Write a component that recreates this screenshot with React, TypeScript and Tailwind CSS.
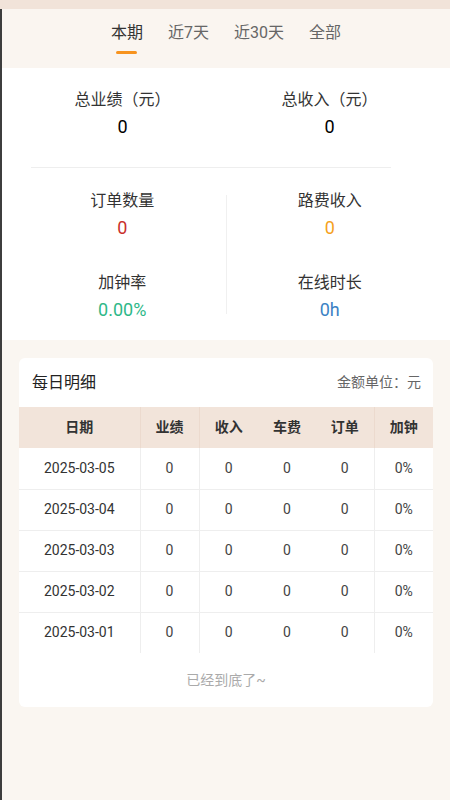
import { useState } from "react";

const tabs = ["本期", "近7天", "近30天", "全部"];

const rows = [
  { date: "2025-03-05", perf: 0, income: 0, fare: 0, orders: 0, extra: "0%" },
  { date: "2025-03-04", perf: 0, income: 0, fare: 0, orders: 0, extra: "0%" },
  { date: "2025-03-03", perf: 0, income: 0, fare: 0, orders: 0, extra: "0%" },
  { date: "2025-03-02", perf: 0, income: 0, fare: 0, orders: 0, extra: "0%" },
  { date: "2025-03-01", perf: 0, income: 0, fare: 0, orders: 0, extra: "0%" },
];

function Stat({ label, value, color }: { label: string; value: string; color: string }) {
  return (
    <div className="flex flex-col items-center">
      <span className="text-[16px] leading-[22px] text-[#333]">{label}</span>
      <span className={`mt-[4px] text-[18px] leading-[24px] ${color}`}>{value}</span>
    </div>
  );
}

export default function App() {
  const [active, setActive] = useState(0);

  return (
    <div className="min-h-[800px] bg-[#faf6f1] font-['Roboto','Noto_Sans_CJK_SC',sans-serif]">
      <div className="h-[9px] bg-[#f1e3d9]" />
      <div className="min-h-[791px] border-l-2 border-[#3d3d3d]">
        {/* Tabs */}
        <div className="flex justify-center gap-[25px] bg-[#faf5f0] pt-[13px] pb-[14px]">
          {tabs.map((t, i) => (
            <button
              key={t}
              onClick={() => setActive(i)}
              className="flex flex-col items-center"
            >
              <span
                className={`text-[16px] leading-[22px] ${
                  i === active ? "text-[#333]" : "text-[#666]"
                }`}
              >
                {t}
              </span>
              <span
                className={`mt-[7px] h-[3px] w-[21px] rounded-full ${
                  i === active ? "bg-[#f7931e]" : "bg-transparent"
                }`}
              />
            </button>
          ))}
        </div>

        {/* Summary */}
        <div className="bg-white pt-[21px] pb-[18px]">
          <div className="mx-[17px] grid grid-cols-2">
            <div className="flex flex-col items-center">
              <span className="text-[16px] leading-[22px] text-[#333]">总业绩（元）</span>
              <span className="mt-[4px] text-[18px] leading-[24px] text-black">0</span>
            </div>
            <div className="flex flex-col items-center">
              <span className="text-[16px] leading-[22px] text-[#333]">总收入（元）</span>
              <span className="mt-[4px] text-[18px] leading-[24px] text-black">0</span>
            </div>
          </div>

          <div className="mt-[28px] ml-[29px] h-px w-[360px] bg-[#eeeeee]" />

          <div className="mx-[17px] mt-[22px] flex">
            <div className="flex flex-1 flex-col gap-[32px]">
              <Stat label="订单数量" value="0" color="text-[#c9302c]" />
              <Stat label="加钟率" value="0.00%" color="text-[#2eb888]" />
            </div>
            <div className="mt-[5px] mb-[8px] w-px bg-[#f0f0f0]" />
            <div className="flex flex-1 flex-col gap-[32px]">
              <Stat label="路费收入" value="0" color="text-[#f5a11c]" />
              <Stat label="在线时长" value="0h" color="text-[#3b82c4]" />
            </div>
          </div>
        </div>

        {/* Daily detail card */}
        <div className="mx-[17px] mt-[18px] overflow-hidden rounded-[6px] bg-white">
          <div className="flex h-[49px] items-center justify-between pl-[13px] pr-[12px]">
            <span className="text-[16px] text-[#222]">每日明细</span>
            <span className="text-[14px] text-[#666]">金额单位：元</span>
          </div>

          <table className="w-full table-fixed border-collapse text-center text-[14px]">
            <colgroup>
              <col className="w-[121px]" />
              <col className="w-[59px]" />
              <col className="w-[59px]" />
              <col className="w-[58px]" />
              <col className="w-[58px]" />
              <col className="w-[59px]" />
            </colgroup>
            <thead>
              <tr className="h-[41px] bg-[#f2e4da] font-bold text-[#333]">
                <th className="border-r border-[#ecdace] font-bold">日期</th>
                <th className="border-r border-[#ecdace] font-bold">业绩</th>
                <th className="font-bold">收入</th>
                <th className="font-bold">车费</th>
                <th className="border-r border-[#ecdace] font-bold">订单</th>
                <th className="font-bold">加钟</th>
              </tr>
            </thead>
            <tbody>
              {rows.map((r, i) => (
                <tr
                  key={r.date}
                  className={`h-[41px] text-[#444] ${
                    i < rows.length - 1 ? "border-b border-[#eeeeee]" : ""
                  }`}
                >
                  <td className="border-r border-[#eeeeee] text-[#333]">{r.date}</td>
                  <td className="border-r border-[#eeeeee]">{r.perf}</td>
                  <td>{r.income}</td>
                  <td>{r.fare}</td>
                  <td className="border-r border-[#eeeeee]">{r.orders}</td>
                  <td>{r.extra}</td>
                </tr>
              ))}
            </tbody>
          </table>

          <div className="flex h-[54px] items-center justify-center text-[14px] text-[#aaaaaa]">
            已经到底了~
          </div>
        </div>
      </div>
    </div>
  );
}
